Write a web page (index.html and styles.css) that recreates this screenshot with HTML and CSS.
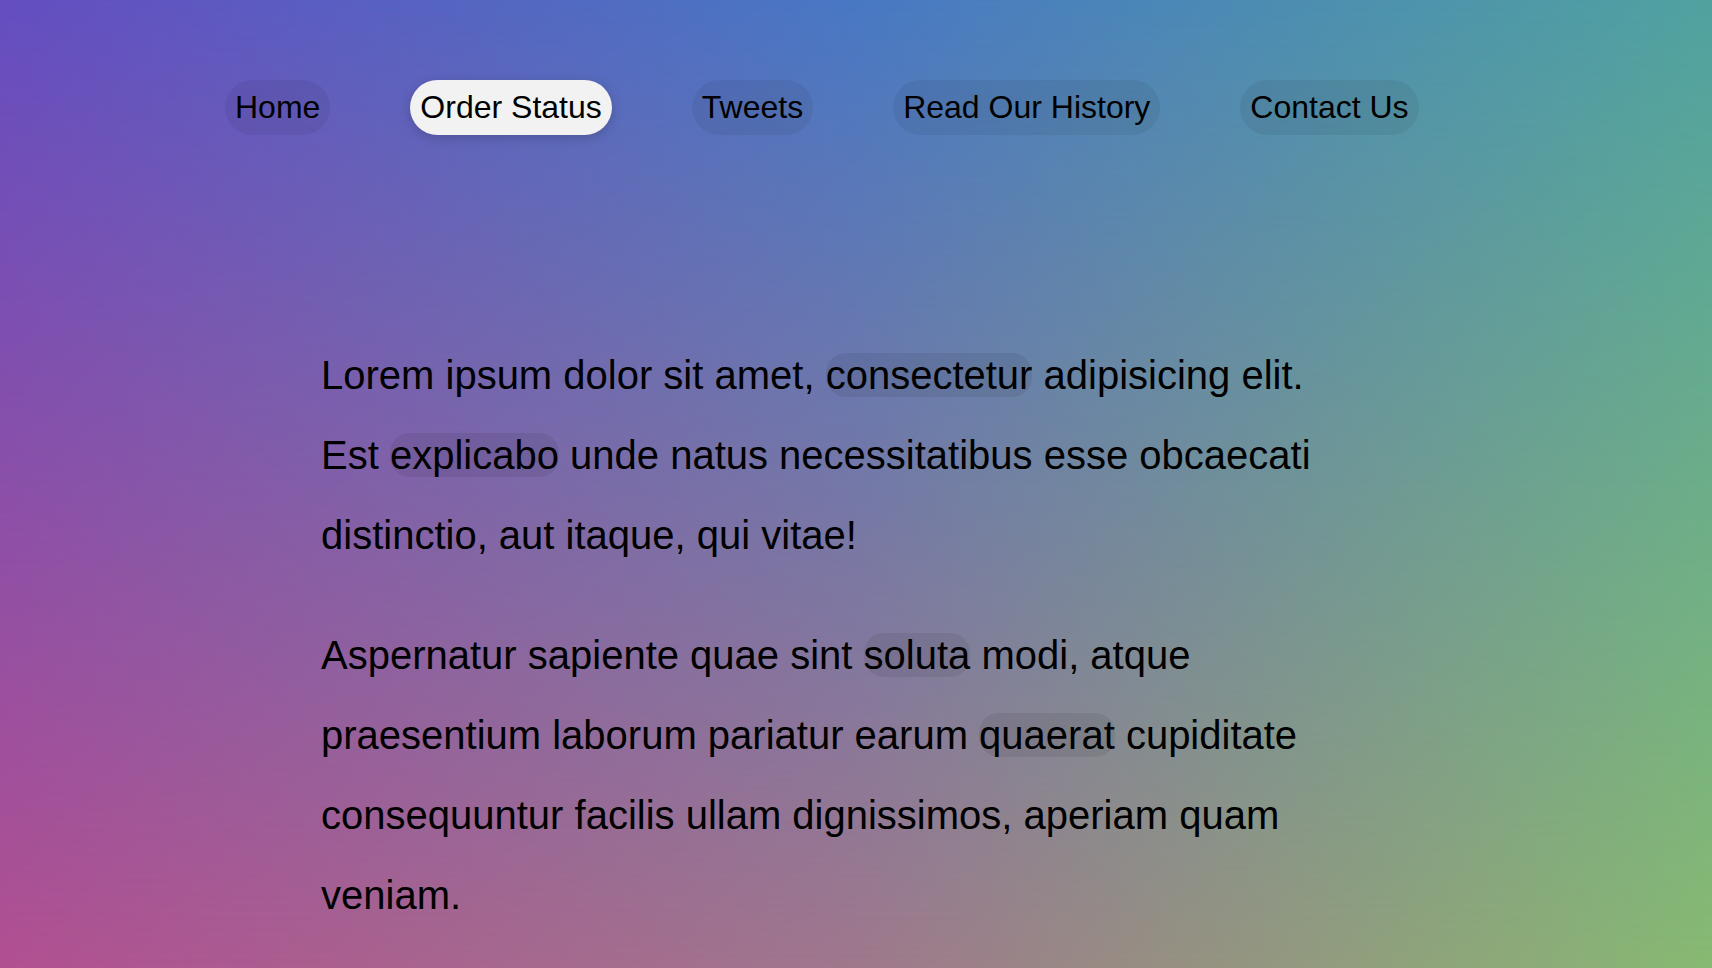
FILE: index.html
```html
<!DOCTYPE html>
<html lang="en">
<head>
<meta charset="utf-8">
<title>Order Status</title>
<link rel="stylesheet" href="styles.css">
</head>
<body>
<div class="page">
  <nav class="nav">
    <a class="pill" href="#">Home</a>
    <a class="pill active" href="#">Order Status</a>
    <a class="pill" href="#">Tweets</a>
    <a class="pill" href="#">Read Our History</a>
    <a class="pill" href="#">Contact Us</a>
  </nav>
  <main class="content">
    <p>Lorem ipsum dolor sit amet, <span class="hl">consectetur</span> adipisicing elit. Est <span class="hl">explicabo</span> unde natus necessitatibus esse obcaecati distinctio, aut itaque, qui vitae!</p>
    <p>Aspernatur sapiente quae sint <span class="hl">soluta</span> modi, atque praesentium laborum pariatur earum <span class="hl">quaerat</span> cupiditate consequuntur facilis ullam dignissimos, aperiam quam veniam.</p>
  </main>
</div>
</body>
</html>
```
FILE: styles.css
```css
html, body {
  margin: 0;
  padding: 0;
}
body {
  font-family: "Liberation Sans", Arial, sans-serif;
  color: #000;
}
.page {
  position: relative;
  min-height: 968px;
  overflow: hidden;
  background: linear-gradient(to right, rgb(178, 80, 145) 0%, rgb(160, 120, 140) 50%, rgb(136, 186, 114) 100%);
}
.page::before {
  content: "";
  position: absolute;
  inset: 0;
  background: linear-gradient(to right, rgb(100, 78, 192) 0%, rgb(72, 120, 195) 50%, rgb(80, 162, 160) 100%);
  -webkit-mask-image: linear-gradient(to bottom, #000 0%, transparent 100%);
  mask-image: linear-gradient(to bottom, #000 0%, transparent 100%);
  pointer-events: none;
}
.nav {
  position: relative;
  display: flex;
  gap: 80px;
  padding: 80px 0 0 225px;
}
.pill {
  display: block;
  font-size: 32px;
  line-height: 38px;
  padding: 8px 10px 9px;
  border-radius: 28px;
  color: #000;
  text-decoration: none;
  background: rgba(0, 0, 0, 0.06);
}
.pill.active {
  background: #f2f2f2;
  box-shadow: 0 3px 12px rgba(0, 0, 0, 0.18);
}
.content {
  position: relative;
  padding-top: 160px;
  margin-left: 321px;
  width: 1020px;
}
.content p {
  font-size: 40px;
  line-height: 80px;
  margin: 40px 0;
}
.hl {
  background: rgba(0, 0, 0, 0.07);
  border-radius: 20px;
}
```
